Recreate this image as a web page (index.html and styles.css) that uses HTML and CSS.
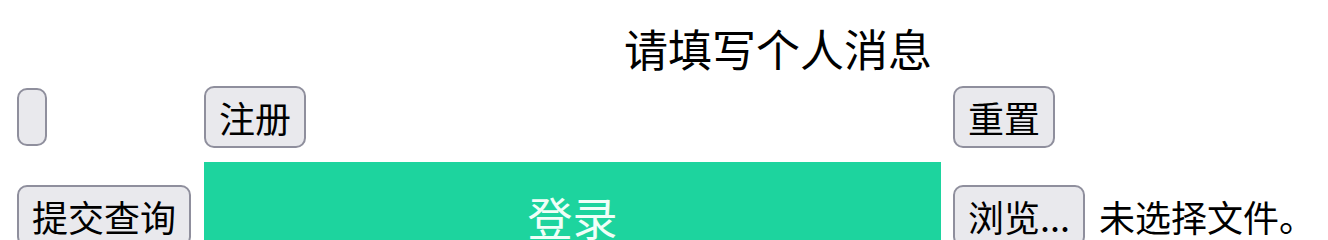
FILE: index.html
```html
<!DOCTYPE html>
<html lang="zh">
<head>
<meta charset="utf-8">
<title>请填写个人消息</title>
<link rel="stylesheet" href="styles.css">
</head>
<body>
<h1 class="title">请填写个人消息</h1>
<div class="form-grid">
  <div class="cell"><button class="btn btn-empty" type="button"></button></div>
  <div class="cell"><button class="btn" type="button">注册</button></div>
  <div class="cell"><button class="btn" type="reset">重置</button></div>
  <div class="cell"><button class="btn" type="submit">提交查询</button></div>
  <div class="cell cell-wide"><button class="login" type="button">登录</button></div>
  <div class="cell file-cell"><button class="btn" type="button">浏览...</button><span class="file-label">未选择文件。</span></div>
</div>
</body>
</html>
```
FILE: styles.css
```css
html, body {
  margin: 0;
  padding: 0;
  background: #ffffff;
}
body {
  font-family: "Noto Sans CJK SC", "Noto Sans", sans-serif;
  color: #000;
  overflow: hidden;
}
.title {
  margin: 0;
  padding: 17px 0 2px 624px;
  font-size: 44px;
  font-weight: normal;
  line-height: 62px;
  white-space: nowrap;
}
.form-grid {
  display: grid;
  grid-template-columns: 175px 737px auto;
  column-gap: 12px;
  row-gap: 14px;
  padding: 5px 0 0 17px;
  align-items: center;
}
.cell {
  display: flex;
  align-items: center;
}
.btn {
  font-family: "Noto Sans CJK SC", "Noto Sans", sans-serif;
  font-size: 36px;
  line-height: 48px;
  height: 62px;
  padding: 0 13px;
  border: 2px solid #8f8f9d;
  border-radius: 10px;
  background: #e9e9ed;
  color: #000;
  white-space: nowrap;
}
.btn-empty {
  width: 30px;
  height: 58px;
  padding: 0;
}
.login {
  width: 737px;
  height: 108px;
  border: none;
  background: #1dd49e;
  color: #f0fff8;
  font-family: "Noto Sans CJK SC", "Noto Sans", sans-serif;
  font-size: 45px;
  padding: 0;
}
.file-label {
  font-size: 36px;
  margin-left: 14px;
  white-space: nowrap;
}
```
